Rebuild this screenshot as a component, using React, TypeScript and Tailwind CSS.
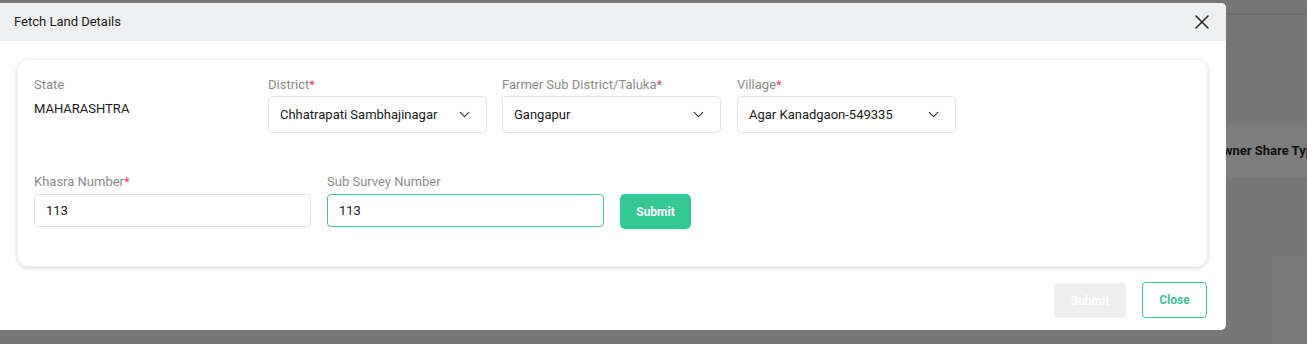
import { X, ChevronDown } from "lucide-react";

type SelectProps = { label: string; value: string; required?: boolean };

function Label({ text, required }: { text: string; required?: boolean }) {
  return (
    <div className="text-[13px] leading-4 text-[#8c8c8c]">
      {text}
      {required && <span className="text-[#e8405f]">*</span>}
    </div>
  );
}

function SelectBox({ label, value, required }: SelectProps) {
  return (
    <div className="w-[219px] flex flex-col gap-[3px]">
      <Label text={label} required={required} />
      <div className="h-[37px] border border-[#e2e2e2] rounded-[5px] flex items-center justify-between pl-[11px] pr-[13px] bg-white">
        <span className="text-[13px] text-[#1a1a1a]">{value}</span>
        <ChevronDown className="w-[17px] h-[17px] text-[#333]" strokeWidth={1.6} />
      </div>
    </div>
  );
}

export default function App() {
  return (
    <div className="relative w-full h-[344px] overflow-hidden bg-[#efefef] font-['Roboto',sans-serif]">
      {/* page behind the overlay */}
      <div className="h-[15px] border-b-2 border-[#dcdcdc]" />
      <div className="mt-[108px] h-[55px] bg-[#fbfbfb] flex items-center pl-[1214px]">
        <span className="text-[13px] font-bold text-[#1f1f1f] whitespace-nowrap">Owner Share Type</span>
      </div>

      {/* overlay */}
      <div className="absolute inset-0 bg-black/50" />

      {/* modal */}
      <div className="absolute left-0 top-[3px] w-[1226px] h-[327px] bg-white rounded-r-[5px] flex flex-col">
        <div className="h-[38px] bg-[#f0f1f3] rounded-tr-[5px] flex items-center justify-between pl-[14px] pr-[12px]">
          <span className="text-[13px] text-[#1a1a1a]">Fetch Land Details</span>
          <X className="w-[24px] h-[24px] text-[#2b2b2b]" strokeWidth={1.6} />
        </div>

        <div className="mt-[18px] mx-[17px] w-[1191px] h-[208px] rounded-[12px] border border-[#f0f0f0] shadow-[0_1px_4px_rgba(0,0,0,0.16)] pt-[17px] pl-[16px]">
          <div className="flex gap-[15px]">
            <div className="w-[219px] flex flex-col gap-[6px]">
              <Label text="State" />
              <div className="text-[13px] text-[#1a1a1a]">MAHARASHTRA</div>
            </div>
            <SelectBox label="District" value="Chhatrapati Sambhajinagar" required />
            <SelectBox label="Farmer Sub District/Taluka" value="Gangapur" required />
            <div className="ml-px">
              <SelectBox label="Village" value="Agar Kanadgaon-549335" required />
            </div>
          </div>

          <div className="mt-[41px] flex items-end gap-[16px]">
            <div className="w-[277px] flex flex-col gap-[4px]">
              <Label text="Khasra Number" required />
              <div className="h-[33px] border border-[#e2e2e2] rounded-[4px] flex items-center px-[11px] text-[13px] text-[#1a1a1a]">
                113
              </div>
            </div>
            <div className="w-[277px] flex flex-col gap-[4px]">
              <Label text="Sub Survey Number" />
              <div className="h-[33px] border border-[#4dbf9f] rounded-[4px] flex items-center px-[11px] text-[13px] text-[#1a1a1a]">
                113
              </div>
            </div>
            <button className="w-[71px] h-[35px] mb-[-2px] rounded-[5px] bg-[#34c894] text-white text-[12px] font-bold">
              Submit
            </button>
          </div>
        </div>

        <div className="mt-[15px] flex justify-end gap-[16px] pr-[19px]">
          <button className="w-[72px] h-[35px] mt-[1px] rounded-[4px] bg-[#efefef] text-white text-[12px] font-bold">
            Submit
          </button>
          <button className="w-[65px] h-[36px] rounded-[4px] border border-[#3ec49a] bg-white text-[#3ec49a] text-[12px] font-bold">
            Close
          </button>
        </div>
      </div>
    </div>
  );
}
